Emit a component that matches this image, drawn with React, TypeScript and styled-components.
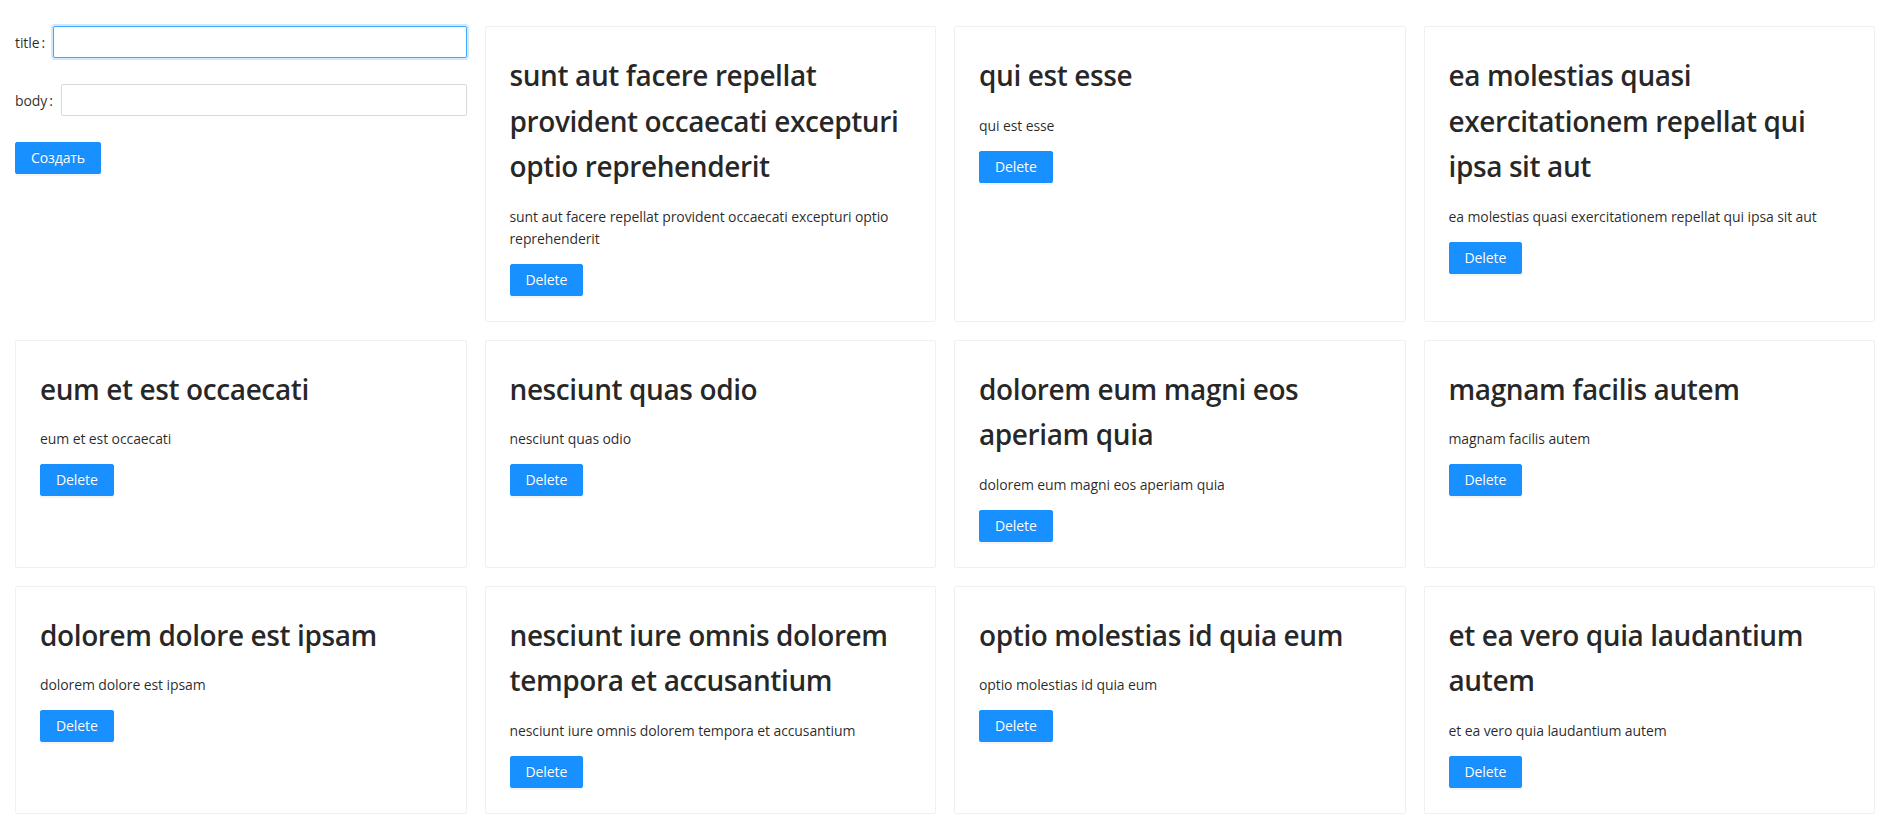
import { useState } from "react";
import styled, { createGlobalStyle } from "styled-components";

const GlobalStyle = createGlobalStyle`
  * {
    box-sizing: border-box;
  }

  body {
    margin: 0;
    background: #fff;
    color: rgba(0, 0, 0, 0.85);
    font-family: "Open Sans", "Noto Sans", sans-serif;
    font-size: 14px;
  }
`;

const Page = styled.div`
  display: grid;
  grid-template-columns: repeat(4, minmax(0, 1fr));
  gap: 18px;
  padding: 26px 16px 13px 15px;
`;

const Form = styled.form`
  display: flex;
  flex-direction: column;
  align-items: flex-start;
  gap: 26px;
`;

const FormItem = styled.div`
  display: flex;
  align-items: center;
  width: 100%;
  height: 32px;
`;

const Label = styled.label`
  white-space: nowrap;
  font-size: 14px;
  letter-spacing: -0.1px;
  color: rgba(0, 0, 0, 0.85);

  &::after {
    content: ":";
    margin: 0 8px 0 2px;
  }
`;

const Input = styled.input<{ $active?: boolean }>`
  flex: 1;
  min-width: 0;
  height: 32px;
  padding: 4px 11px;
  border: 1px solid ${(p) => (p.$active ? "#40a9ff" : "#d9d9d9")};
  border-radius: 2px;
  box-shadow: ${(p) => (p.$active ? "0 0 0 2px rgba(24, 144, 255, 0.2)" : "none")};
  font: inherit;
  color: rgba(0, 0, 0, 0.85);
  outline: none;

  &:focus {
    border-color: #40a9ff;
    box-shadow: 0 0 0 2px rgba(24, 144, 255, 0.2);
  }
`;

const Button = styled.button`
  height: 32px;
  padding: 4px 15px;
  border: 1px solid #1890ff;
  border-radius: 2px;
  background: #1890ff;
  color: #fff;
  font-family: inherit;
  font-size: 14px;
  line-height: 1.5715;
  letter-spacing: -0.1px;
  text-shadow: 0 -1px 0 rgba(0, 0, 0, 0.12);
  box-shadow: 0 2px 0 rgba(0, 0, 0, 0.045);
  cursor: pointer;
`;

const Card = styled.div`
  padding: 24px 24px 25px;
  border: 1px solid #f0f0f0;
  border-radius: 2px;
  background: #fff;
`;

const Title = styled.h2`
  margin: 0 0 16px;
  padding-top: 2px;
  font-size: 28px;
  font-weight: 600;
  line-height: 45.5px;
  letter-spacing: -0.4px;
  color: rgba(0, 0, 0, 0.85);
`;

const Body = styled.p`
  margin: 0 0 14px;
  font-size: 14px;
  line-height: 22px;
  letter-spacing: -0.1px;
`;

type Post = {
  id: number;
  title: string;
  body: string;
};

const initialTitles = [
  "sunt aut facere repellat provident occaecati excepturi optio reprehenderit",
  "qui est esse",
  "ea molestias quasi exercitationem repellat qui ipsa sit aut",
  "eum et est occaecati",
  "nesciunt quas odio",
  "dolorem eum magni eos aperiam quia",
  "magnam facilis autem",
  "dolorem dolore est ipsam",
  "nesciunt iure omnis dolorem tempora et accusantium",
  "optio molestias id quia eum",
  "et ea vero quia laudantium autem",
];

const initialPosts: Post[] = initialTitles.map((title, i) => ({
  id: i + 1,
  title,
  body: title,
}));

export default function App() {
  const [posts, setPosts] = useState<Post[]>(initialPosts);
  const [title, setTitle] = useState("");
  const [body, setBody] = useState("");

  const createPost = (e: React.FormEvent) => {
    e.preventDefault();
    if (!title) return;
    setPosts([{ id: Date.now(), title, body }, ...posts]);
    setTitle("");
    setBody("");
  };

  const deletePost = (id: number) => {
    setPosts(posts.filter((p) => p.id !== id));
  };

  return (
    <>
      <GlobalStyle />
      <Page>
        <Form onSubmit={createPost}>
          <FormItem>
            <Label htmlFor="title">title</Label>
            <Input
              id="title"
              $active
              value={title}
              onChange={(e) => setTitle(e.target.value)}
            />
          </FormItem>
          <FormItem>
            <Label htmlFor="body">body</Label>
            <Input
              id="body"
              value={body}
              onChange={(e) => setBody(e.target.value)}
            />
          </FormItem>
          <Button type="submit">Создать</Button>
        </Form>
        {posts.map((post) => (
          <Card key={post.id}>
            <Title>{post.title}</Title>
            <Body>{post.body}</Body>
            <Button type="button" onClick={() => deletePost(post.id)}>
              Delete
            </Button>
          </Card>
        ))}
      </Page>
    </>
  );
}
